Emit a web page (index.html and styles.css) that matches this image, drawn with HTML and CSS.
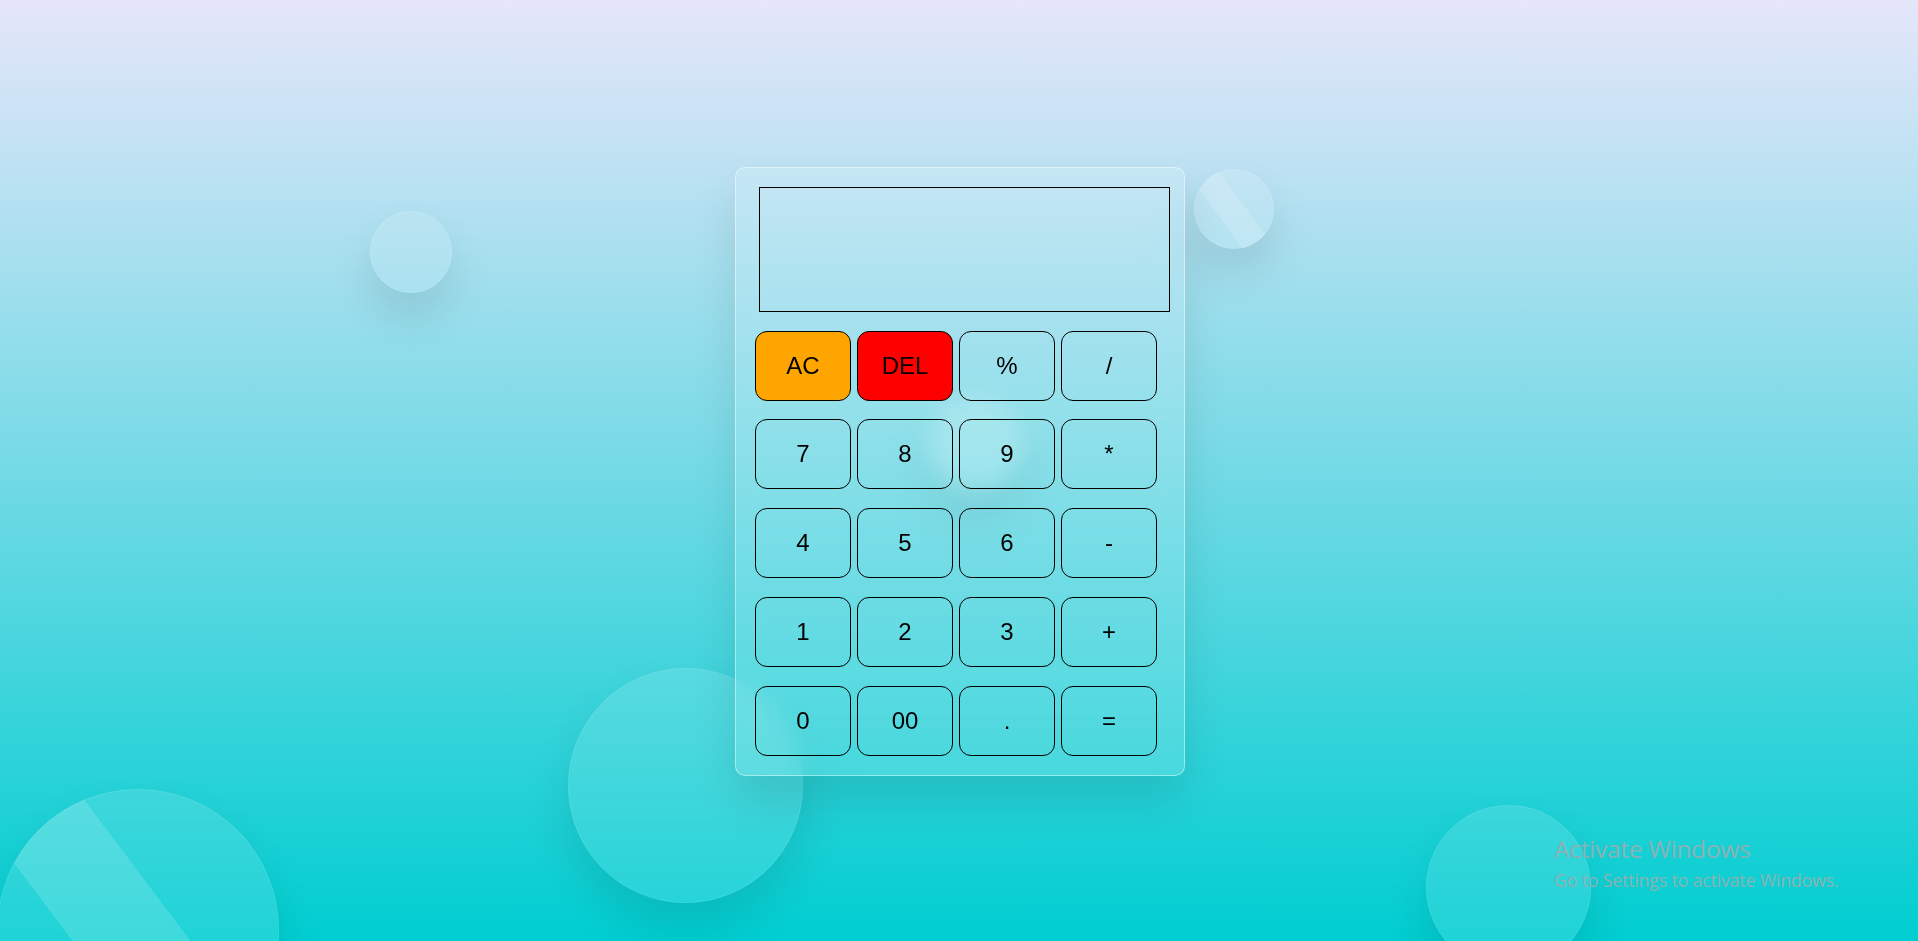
FILE: index.html
```html
<!DOCTYPE html>
<html lang="en">
<head>
<meta charset="utf-8">
<title>Calculator</title>
<link rel="stylesheet" href="styles.css">
</head>
<body>
  <div class="scene">
    <div class="circle c1"></div>
    <div class="circle c2 striped"></div>
    <div class="circle c3 striped"></div>
    <div class="circle c4"></div>
    <div class="circle c5"></div>
    <div class="circle c6"></div>

    <main class="calculator">
      <div class="display"></div>
      <div class="keys">
        <button class="key key-ac">AC</button>
        <button class="key key-del">DEL</button>
        <button class="key">%</button>
        <button class="key">/</button>
        <button class="key">7</button>
        <button class="key">8</button>
        <button class="key">9</button>
        <button class="key">*</button>
        <button class="key">4</button>
        <button class="key">5</button>
        <button class="key">6</button>
        <button class="key">-</button>
        <button class="key">1</button>
        <button class="key">2</button>
        <button class="key">3</button>
        <button class="key">+</button>
        <button class="key">0</button>
        <button class="key">00</button>
        <button class="key">.</button>
        <button class="key">=</button>
      </div>
    </main>

    <div class="activate">
      <div class="activate-title">Activate Windows</div>
      <div class="activate-sub">Go to Settings to activate Windows.</div>
    </div>
  </div>
</body>
</html>
```
FILE: styles.css
```css
* {
  box-sizing: border-box;
}

html, body {
  margin: 0;
  padding: 0;
  height: 100%;
  overflow: hidden;
}

body {
  background: linear-gradient(to bottom, #e6e6fa 0%, #00ced1 100%);
  font-family: "Liberation Sans", Arial, sans-serif;
}

.scene {
  position: relative;
  width: 100vw;
  height: 100vh;
  overflow: hidden;
  display: flex;
  align-items: center;
  justify-content: center;
  padding: 1px 0 0 2px;
}

.circle {
  position: absolute;
  border-radius: 50%;
  background: rgba(255, 255, 255, 0.12);
  border: 1px solid rgba(255, 255, 255, 0.08);
  box-shadow: 0 25px 45px rgba(0, 0, 0, 0.1);
  overflow: hidden;
}

.striped {
  background:
    linear-gradient(53deg,
      rgba(255, 255, 255, 0) 35%,
      rgba(255, 255, 255, 0.14) 35%,
      rgba(255, 255, 255, 0.14) 59%,
      rgba(255, 255, 255, 0) 59%),
    rgba(255, 255, 255, 0.12);
}

.c1 { left: 370px; top: 211px; width: 82px; height: 82px; }
.c2 { left: 1194px; top: 169px; width: 80px; height: 80px; }
.c3 { left: -3px; top: 789px; width: 282px; height: 282px; }
.c4 { left: 568px; top: 668px; width: 235px; height: 235px; }
.c5 { left: 1426px; top: 805px; width: 165px; height: 165px; }
.c6 { left: 928px; top: 396px; width: 95px; height: 95px; background: rgba(255, 255, 255, 0.2); }

.calculator {
  position: relative;
  z-index: 1;
  width: 450px;
  padding: 19px 27px 19px 19px;
  border: 1px solid rgba(255, 255, 255, 0.45);
  border-radius: 10px;
  background: rgba(255, 255, 255, 0.14);
  backdrop-filter: blur(11px);
  -webkit-backdrop-filter: blur(11px);
  box-shadow: 0 25px 45px rgba(0, 0, 0, 0.1);
  display: flex;
  flex-direction: column;
  gap: 19px;
}

.display {
  margin-left: 4px;
  width: 411px;
  height: 125px;
  border: 1px solid #000;
  background: transparent;
}

.keys {
  display: grid;
  grid-template-columns: repeat(4, 96px);
  grid-auto-rows: 70px;
  column-gap: 6px;
  row-gap: 18.75px;
}

.key {
  margin: 0;
  padding: 0;
  border: 1px solid #000;
  border-radius: 12px;
  background: transparent;
  color: #000;
  font-family: "Liberation Sans", Arial, sans-serif;
  font-size: 24px;
  line-height: 1;
  display: flex;
  align-items: center;
  justify-content: center;
}

.key-ac {
  background: #ffa500;
}

.key-del {
  background: #ff0000;
}

.activate {
  position: absolute;
  left: 1554px;
  top: 834px;
  color: #8bb1b3;
  font-family: "Open Sans", "Noto Sans", sans-serif;
  display: flex;
  flex-direction: column;
  gap: 5px;
  pointer-events: none;
}

.activate-title {
  font-size: 24.5px;
  line-height: 30px;
  letter-spacing: -0.3px;
}

.activate-sub {
  font-size: 17.8px;
  line-height: 22px;
  letter-spacing: -0.2px;
}
```
